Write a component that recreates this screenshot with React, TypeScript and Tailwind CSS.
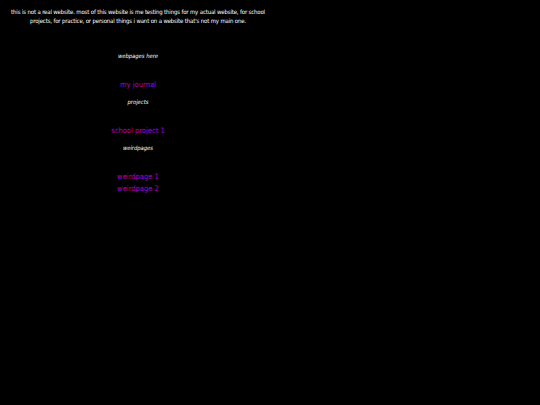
const Link = ({ children }: { children: string }) => (
  <a href="#" className="block text-[#b000c8] text-[7.5px] leading-[12px]">{children}</a>
)

const Heading = ({ children }: { children: string }) => (
  <p className="italic text-white text-[5.8px] leading-[10px]">{children}</p>
)

export default function App() {
  return (
    <div className="min-h-screen bg-black text-white" style={{ fontFamily: '"DejaVu Sans Condensed", "DejaVu Sans", sans-serif' }}>
      <div className="w-[276px] text-center pt-[7px]">
        <p className="text-[6px] leading-[9px] tracking-[-0.15px] px-[8px]">
          this is not a real website. most of this website is me testing things for my actual website, for school projects, for practice, or personal things i want on a website that's not my main one.
        </p>

        <div className="mt-[26px] flex flex-col items-center">
          <Heading>webpages here</Heading>
          <div className="h-[18px]" />
          <Link>my journal</Link>
          <div className="h-[6px]" />
          <Heading>projects</Heading>
          <div className="h-[18px]" />
          <Link>school project 1</Link>
          <div className="h-[6px]" />
          <Heading>weirdpages</Heading>
          <div className="h-[18px]" />
          <Link>weirdpage 1</Link>
          <Link>weirdpage 2</Link>
        </div>
      </div>
    </div>
  )
}
